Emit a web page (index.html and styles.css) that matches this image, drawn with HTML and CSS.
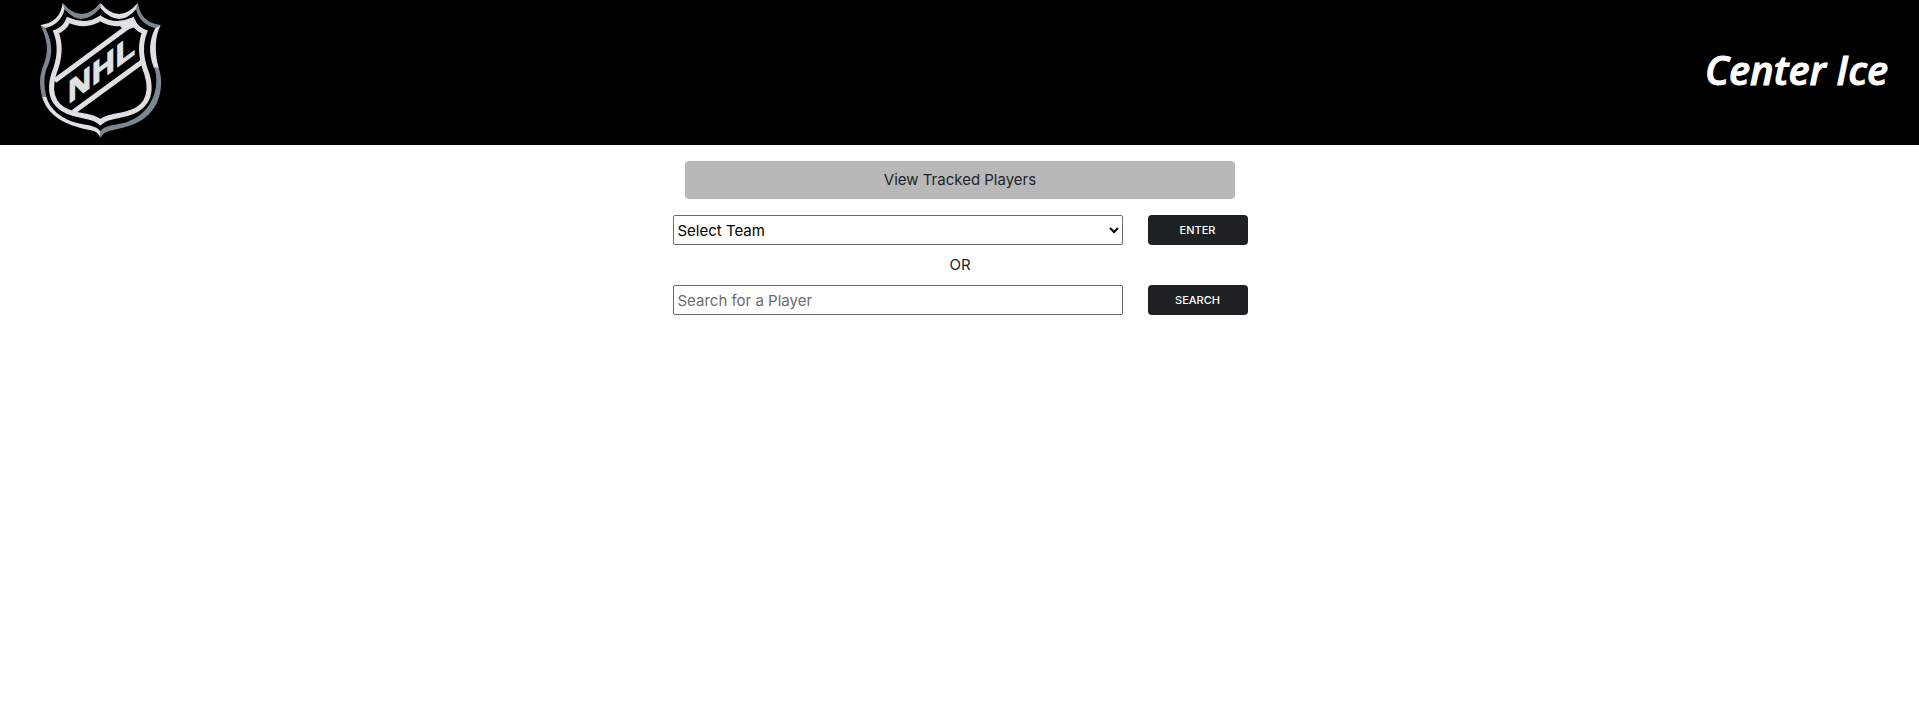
FILE: index.html
```html
<!DOCTYPE html>
<html lang="en">
<head>
<meta charset="utf-8">
<title>Center Ice</title>
<link rel="stylesheet" href="styles.css">
</head>
<body>
<header class="header">
  <svg class="logo" viewBox="0 0 420 435" role="img" aria-label="NHL">
    <g class="steel">
      <path d="M98 8Q155 76 211 8V24Q155 88 104 28Z"/>
      <path d="M324 8Q330 66 392 75L376 84Q330 74 318 28Z"/>
      <path d="M31 75C66 145 46 180 36 208Q24 245 36 290H49Q37 245 49 208C63 180 75 140 46 84Z"/>
      <path d="M371 200Q382 222 378 260C368 320 328 356 281 369C250 376 224 376 211 394V413Q220 396 240 392C310 378 375 358 391 275Q398 235 386 203Z"/>
    </g>
    <g class="light">
      <path d="M98 8Q92 66 31 75L46 84Q92 74 104 28Z"/>
      <path d="M211 8Q267 76 324 8L318 28Q267 88 211 24Z"/>
      <path d="M392 75Q366 128 386 204L371 202Q347 140 376 84Z"/>
      <path d="M36 290C58 360 125 378 182 391Q203 394 211 413V394C198 376 172 376 141 369C92 356 58 325 49 290Z"/>
    </g>
    <path class="inner" d="M115 60Q104 87 78 96C96 142 84 190 72 220C48 298 87 329 131 341C164 350 192 349 211 367C230 349 258 350 291 341C335 329 374 298 350 220C338 190 326 142 344 96Q318 87 307 60Q255 84 211 55Q167 84 115 60Z"/>
    <path class="band" d="M74 242L302 74M130 336L343 181"/>
    <path class="light" d="M268 76L312 64L318 80L282 92Z"/>
    <text class="letters" transform="translate(115 312) skewY(-37)" x="0 71 142" y="0">NHL</text>
  </svg>
  <h1 class="title">Center Ice</h1>
</header>
<main class="main">
  <button class="tracked" type="button">View Tracked Players</button>
  <form class="row">
    <select class="field" aria-label="Select Team">
      <option>Select Team</option>
    </select>
    <button class="submit" type="button">ENTER</button>
  </form>
  <p class="or">OR</p>
  <form class="row">
    <input class="field" type="text" placeholder="Search for a Player" aria-label="Search for a Player">
    <button class="submit" type="button">SEARCH</button>
  </form>
</main>
</body>
</html>
```
FILE: styles.css
```css
* {
  box-sizing: border-box;
}

body {
  margin: 0;
  background: #fff;
  color: #212529;
  font: 15px/24px Inter, "Liberation Sans", sans-serif;
}

.header {
  display: flex;
  align-items: center;
  justify-content: space-between;
  padding: 0 31px 0 30px;
  background: #000;
}

.logo {
  display: block;
  width: 140px;
  height: 145px;
}

.light {
  fill: #dfe0e3;
}

.steel {
  fill: #7b8894;
}

.inner,
.band {
  fill: none;
  stroke: #dfe0e3;
  stroke-width: 15;
}

.letters {
  fill: #dfe0e3;
  stroke: #dfe0e3;
  stroke-width: 4;
  font: bold 94px "Liberation Sans", sans-serif;
}

.title {
  margin: 0 0 6px;
  color: #fff;
  font: italic 600 40px/48px "Open Sans", "Noto Sans", sans-serif;
  -webkit-text-stroke: 1px #fff;
}

.main {
  display: flex;
  flex-direction: column;
  align-items: center;
  padding: 16px 15px 16px 16px;
}

.tracked {
  width: 100%;
  max-width: 550px;
  margin-bottom: 16px;
  padding: 7px 12px;
  border: 0;
  border-radius: 4px;
  background: #b8b8b8;
  color: #212529;
  font: inherit;
}

.row {
  display: flex;
  gap: 25px;
  width: 100%;
  max-width: 575px;
}

.field {
  flex: 1;
  min-width: 0;
  height: 30px;
  padding: 0 4px;
  border: 1px solid #6b6b6b;
  border-radius: 2px;
  background: #fff;
  color: #000;
  font: inherit;
}

select.field {
  padding: 0;
}

.field::placeholder {
  color: #6c6c6c;
}

.submit {
  width: 100px;
  height: 30px;
  padding: 0;
  border: 0;
  border-radius: 4px;
  background: #1e2124;
  color: #fff;
  font: 500 11px/16px Inter, "Liberation Sans", sans-serif;
}

.or {
  margin: 8px 0;
}
```
